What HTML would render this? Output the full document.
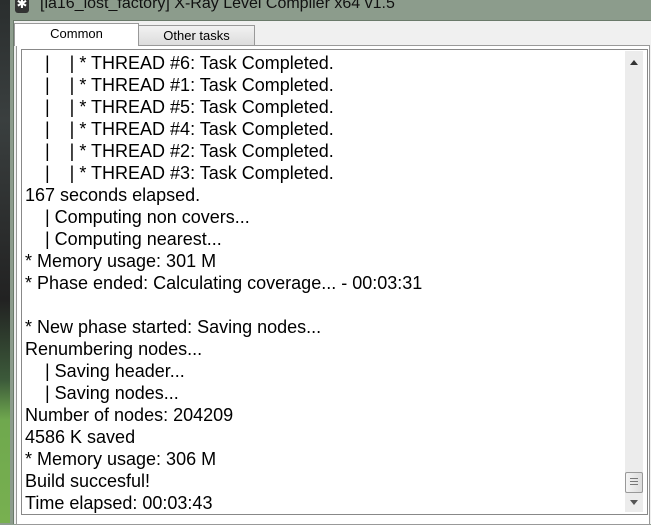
<!DOCTYPE html>
<html><head><style>
body{margin:0;width:651px;height:523px;overflow:hidden;position:relative;background:#8d9d8d;font-family:"Liberation Sans",Arial,sans-serif}
#desk{position:absolute;left:0;top:0;width:10px;height:523px;background:linear-gradient(#2a2e2e 0,#3a3f3f 120px,#222 300px,#3c5a3a 380px,#6fa84e 420px,#78b050 523px)}
#title{position:absolute;left:10px;top:0;width:641px;height:20px;background:#8c9c8c;}
#title span{position:absolute;left:30px;top:-5px;font-size:16px;color:#111;white-space:nowrap}
#icon{position:absolute;left:5px;top:-3px;width:14px;height:16px;background:#333;border-radius:3px;color:#fff;font-size:13px;text-align:center;line-height:14px}
#client{position:absolute;left:13px;top:20px;width:638px;height:503px;background:#f0f0f0;border-left:1px solid #6a7a6a;border-top:1px solid #6a7a6a}
.tab{position:absolute;font-size:13px;color:#000;text-align:center}
#t1{left:0;top:2px;width:123px;height:22px;line-height:20px;background:#fff;border:1px solid #999;border-bottom:none}
#t2{left:124px;top:4px;width:115px;height:19px;line-height:20px;background:linear-gradient(#f2f2f2,#dcdcdc);border:1px solid #999}
#panel{position:absolute;left:2px;top:24px;width:632px;height:478px;border:1px solid #999;background:#fff}
#box{position:absolute;left:21px;top:49px;width:625px;height:464px;border:1px solid #888;background:#fff}
#text{position:absolute;left:3px;top:2px;font-size:18px;line-height:22px;color:#000;white-space:pre}
#sb{position:absolute;right:4px;top:1px;width:18px;height:461px;background:#ececec}
.ar{position:absolute;left:5px;width:0;height:0;border-left:4px solid transparent;border-right:4px solid transparent}
#thumb{position:absolute;left:0;top:421px;width:16px;height:19px;border:1px solid #999;border-radius:2px;background:linear-gradient(90deg,#f4f4f4,#dcdcdc)}
</style></head><body>
<div id="desk"></div>
<div id="title"><div id="icon">✱</div><span>[la16_lost_factory] X-Ray Level Compiler x64 v1.5</span></div>
<div id="client">
<div id="panel"></div>
<div class="tab" id="t1">Common</div>
<div class="tab" id="t2">Other tasks</div>
</div>
<div id="box">
<div id="text">    |    | * THREAD #6: Task Completed.
    |    | * THREAD #1: Task Completed.
    |    | * THREAD #5: Task Completed.
    |    | * THREAD #4: Task Completed.
    |    | * THREAD #2: Task Completed.
    |    | * THREAD #3: Task Completed.
167 seconds elapsed.
    | Computing non covers...
    | Computing nearest...
* Memory usage: 301 M
* Phase ended: Calculating coverage... - 00:03:31

* New phase started: Saving nodes...
Renumbering nodes...
    | Saving header...
    | Saving nodes...
Number of nodes: 204209
4586 K saved
* Memory usage: 306 M
Build succesful!
Time elapsed: 00:03:43</div>
<div id="sb">
<div class="ar" style="top:9px;border-bottom:5px solid #333"></div>
<div id="thumb"><div style="margin:5px 4px;height:1px;background:#777;box-shadow:0 3px #777,0 6px #777"></div></div>
<div class="ar" style="top:449px;border-top:5px solid #555"></div>
</div>
</div>
</body></html>
